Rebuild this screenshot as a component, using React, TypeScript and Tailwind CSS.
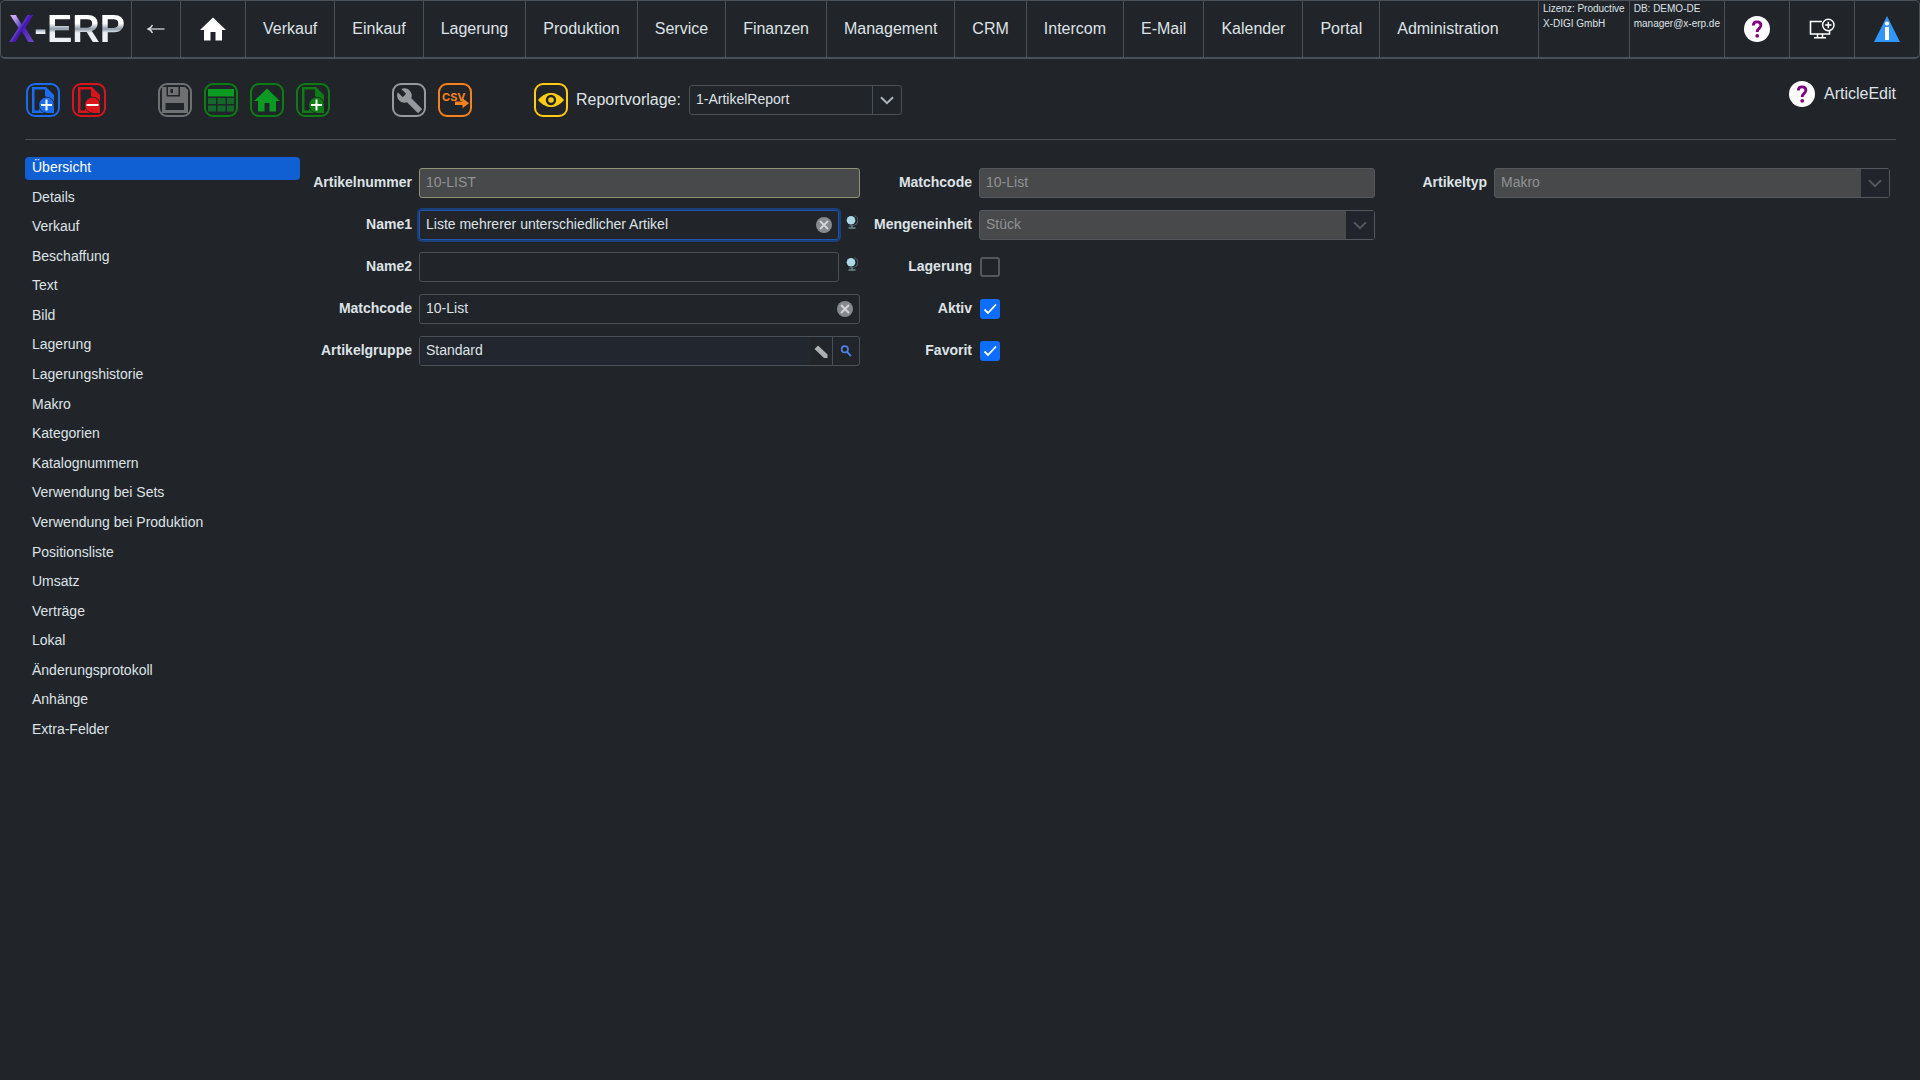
import React, { useState } from 'react';
import { MdBuild } from 'react-icons/md';

const menuItems = [
  'Verkauf', 'Einkauf', 'Lagerung', 'Produktion', 'Service', 'Finanzen', 'Management',
  'CRM', 'Intercom', 'E-Mail', 'Kalender', 'Portal', 'Administration',
];

const sections = [
  'Übersicht', 'Details', 'Verkauf', 'Beschaffung', 'Text', 'Bild', 'Lagerung',
  'Lagerungshistorie', 'Makro', 'Kategorien', 'Katalognummern', 'Verwendung bei Sets',
  'Verwendung bei Produktion', 'Positionsliste', 'Umsatz', 'Verträge', 'Lokal',
  'Änderungsprotokoll', 'Anhänge', 'Extra-Felder',
];

const BackArrow = () => (
  <svg viewBox="0 0 18 12" className="w-[18px]" fill="none" stroke="currentColor">
    <path d="M1.500 6H17.500" strokeWidth="1.200" />
    <path d="M5.500 2.200C4.500 4 3 5.300 1.200 6c1.800.7 3.300 2 4.300 3.800" strokeWidth="1.400" />
  </svg>
);

const HomeShape = ({ className }: { className: string }) => (
  <svg viewBox="0 0 34 34" className={className} fill="currentColor">
    <path d="M17 5.500 30 18h-4v10.500h-6.500V20h-5v8.500H8V18H4z" />
  </svg>
);

const HelpIcon = () => (
  <svg viewBox="0 0 26 26" className="size-[26px]">
    <circle cx="13" cy="13" r="13" fill="#fff" />
    <path d="M9.300 9.600C9.300 7 10.800 5.800 13 5.800s3.900 1.300 3.900 3.500c0 3-3.700 3.200-3.700 6.700" fill="none" stroke="#800080" strokeWidth="2.800" />
    <circle cx="13.200" cy="19.800" r="1.900" fill="#800080" />
  </svg>
);

const MonitorPlus = () => (
  <svg viewBox="0 0 26 22" className="w-[26px]" fill="none" stroke="#fff">
    <path d="M13 3.500H1.500v12.500h19v-3" strokeWidth="1.600" />
    <path d="M8.500 16v3.500M13.500 16v3.500M5 19.700h12" strokeWidth="1.500" />
    <circle cx="19.300" cy="7" r="5.700" strokeWidth="1.500" />
    <path d="M19.300 3.800v6.400M16.100 7h6.400" strokeWidth="1.500" />
  </svg>
);

const InfoTriangle = () => (
  <svg viewBox="0 0 26 26" className="size-[26px]">
    <path d="M13 0 26 26H0z" fill="#3296ff" />
    <circle cx="13" cy="7.500" r="2.100" fill="#fff" />
    <path d="M11 11h4v13h-4z" fill="#fff" />
  </svg>
);

const DocumentIcon = ({ minus = false }: { minus?: boolean }) => (
  <svg viewBox="0 0 34 34" className="size-[34px]">
    <path d="M6 4h14l8 8v18H6z" fill="currentColor" />
    <path d="M8.500 6.500H19V13l3 2.500h3V20H13v7.500H8.500z" fill="#212529" />
    <circle cx="20.500" cy="22" r="8.200" fill="#212529" />
    <circle cx="20.500" cy="22" r="7.400" fill="currentColor" />
    <path d="M20 24h8v6h-8z" fill="currentColor" />
    <path d={minus ? 'M14.500 22h12' : 'M15 22h11M20.500 16.500v11'} stroke="#fff" strokeWidth="2" />
  </svg>
);

const SaveIcon = () => (
  <svg viewBox="0 0 34 34" className="size-[34px]">
    <path d="M4 4h23l3 3v23H4z" fill="currentColor" />
    <path d="M8.500 4H22v9.500H8.500zM7.500 20H26v7H7.500z" fill="#212529" />
    <path d="M10 4h10.500v8H10z" fill="currentColor" />
    <path d="M12.500 6H15v4h-2.500z" fill="#212529" />
  </svg>
);

const TableIcon = () => (
  <svg viewBox="0 0 34 34" className="size-[34px]">
    <path d="M4 6h26v7.500H4z" fill="#0a9b23" />
    <path d="M4 15h8v6H4zM13.500 15h8v6h-8zM23 15h7v6h-7zM4 22.500h8v6H4zM13.500 22.500h8v6h-8zM23 22.500h7v6h-7z" fill="#14692a" />
  </svg>
);

const CsvIcon = () => (
  <svg viewBox="0 0 34 34" className="size-[34px]" fill="currentColor">
    <text x="4" y="18" fontFamily="Inter, sans-serif" fontSize="11" fontWeight="700">CSV</text>
    <path d="M17 18.500h7.500V15.200L31 20.200l-6.500 5v-3.200H17z" />
  </svg>
);

const EyeIcon = () => (
  <svg viewBox="0 0 34 34" className="size-[34px]">
    <path d="M4 17C9 11.500 13 10 17 10s8 1.500 13 7c-5 5.500-9 7-13 7s-8-1.500-13-7z" fill="currentColor" />
    <circle cx="17" cy="17" r="4" fill="none" stroke="#212529" strokeWidth="2.400" />
  </svg>
);

const Globe = () => (
  <svg viewBox="0 0 12 14" className="w-3">
    <path d="M8.500.8a5 5 0 0 1-1 9.700L3 10.800" fill="none" stroke="#4d6870" strokeWidth="1" />
    <path d="M2.500 13h7M6 10.500V13" stroke="#6c8a92" strokeWidth="1.400" />
    <circle cx="5" cy="5.200" r="4.300" fill="#add8e6" />
  </svg>
);

const Chevron = () => (
  <svg viewBox="0 0 14 9" className="w-3.5" fill="none" stroke="currentColor" strokeWidth="2">
    <path d="M1 1.200 7 7.200l6-6" />
  </svg>
);

const ToolButton = ({ label, className, children }: { label: string; className: string; children: React.ReactNode }) => (
  <button type="button" aria-label={label} className={`relative flex size-[34px] items-center justify-center ${className}`}>
    {children}
    <span className="absolute inset-0 rounded-[9px] border-2 border-current" />
  </button>
);

const NavCell = ({ label, className = 'px-4', children }: { label: string; className?: string; children: React.ReactNode }) => (
  <button type="button" aria-label={label} className={`flex items-center justify-center border-[#495057] ${className}`}>
    {children}
  </button>
);

const Row = ({ id, label, children }: { id: string; label: string; children: React.ReactNode }) => (
  <div className="flex h-[30px] items-center gap-[7px]">
    <label htmlFor={id} className="w-28 shrink-0 pb-0.5 text-right font-bold">{label}</label>
    {children}
  </div>
);

const inputClass = 'h-[30px] w-full min-w-0 rounded-[3px] border border-[#495057] bg-transparent px-1.5 pb-0.5 outline-none';
const disabledClass = 'h-[30px] w-full min-w-0 rounded-[3px] border bg-[#48494b] px-1.5 pb-0.5 text-[#909294]';

const ClearButton = ({ label, onClick }: { label: string; onClick: () => void }) => (
  <button type="button" aria-label={label} onClick={onClick} className="absolute right-[7px] top-[7px]">
    <svg viewBox="0 0 16 16" className="size-4">
      <circle cx="8" cy="8" r="8" fill="#868a8e" />
      <path d="m4 4 8 8m0-8-8 8" stroke="#d3d5d7" strokeWidth="1.800" />
    </svg>
  </button>
);

const DisabledSelect = ({ id, value }: { id: string; value: string }) => (
  <div className="relative w-full">
    <select id={id} disabled className={`${disabledClass} block appearance-none border-[#54585c] opacity-100`}>
      <option>{value}</option>
    </select>
    <span className="pointer-events-none absolute inset-y-px right-px flex w-7 items-center justify-center bg-[#21252b] text-[#54585c]">
      <Chevron />
    </span>
  </div>
);

const Checkbox = ({ id, defaultChecked = false }: { id: string; defaultChecked?: boolean }) => (
  <span className="relative ml-px flex">
    <input
      id={id}
      type="checkbox"
      defaultChecked={defaultChecked}
      className="peer size-5 appearance-none rounded-[3px] border-2 border-[#54585c] checked:border-[#0d6efd] checked:bg-[#0d6efd]"
    />
    <svg viewBox="0 0 20 20" className="pointer-events-none invisible absolute size-5 peer-checked:visible" fill="none" stroke="#fff" strokeWidth="1.800">
      <path d="m4.500 10.500 3.500 3.500 8-8.500" />
    </svg>
  </span>
);

const App: React.FC = () => {
  const [section, setSection] = useState('Übersicht');
  const [name1, setName1] = useState('Liste mehrerer unterschiedlicher Artikel');
  const [matchcode, setMatchcode] = useState('10-List');

  return (
    <div className="min-h-screen bg-[#212529] font-['Liberation_Sans',Arial,sans-serif] text-sm text-[#dee2e6]">
      {/* Navigation */}
      <header className="flex h-[59px] rounded-[5px] border border-b-2 border-[#495057] text-base">
        <div className="flex w-[130px] items-center justify-center pl-0.5 text-[38px] font-bold leading-none">
          <span className="bg-linear-to-br from-[#c9a8f0] from-20% via-[#4a12b8] via-50% to-[#7a50d0] bg-clip-text text-transparent">X</span>
          <span className="bg-linear-to-b from-white from-35% via-[#8f9cab] via-50% to-[#eef1f4] to-60% bg-clip-text text-transparent">-ERP</span>
        </div>
        <NavCell label="Zurück" className="w-[49px] border-l"><BackArrow /></NavCell>
        <NavCell label="Start" className="w-[65px] border-l text-white"><HomeShape className="size-[34px]" /></NavCell>
        <nav className="flex">
          {menuItems.map(item => (
            <a key={item} href="#" className="flex items-center border-l border-[#495057] px-[17px]">{item}</a>
          ))}
        </nav>
        <div className="ml-auto flex">
          <div className="border-l border-[#495057] px-1 text-[10px] leading-[15px]">
            <p>Lizenz: Productive</p>
            <p>X-DIGI GmbH</p>
          </div>
          <div className="border-l border-[#495057] px-1 text-[10px] leading-[15px]">
            <p>DB: DEMO-DE</p>
            <p>manager@x-erp.de</p>
          </div>
          <NavCell label="Hilfe" className="w-[65px] border-l"><HelpIcon /></NavCell>
          <NavCell label="Neues Fenster" className="w-[65px] border-l"><MonitorPlus /></NavCell>
          <NavCell label="Info" className="w-[65px] border-l"><InfoTriangle /></NavCell>
        </div>
      </header>

      <main className="pl-[25px] pr-6">
        {/* Toolbar */}
        <div className="flex items-start justify-between border-b border-[#495057] pb-[22px] pl-px pt-[22px]">
          <div className="flex items-center pt-0.5">
            <div className="flex gap-3">
              <ToolButton label="Neu" className="text-[#1a6df0]"><DocumentIcon /></ToolButton>
              <ToolButton label="Löschen" className="text-[#d9151b]"><DocumentIcon minus /></ToolButton>
            </div>
            <div className="ml-[52px] flex gap-3">
              <ToolButton label="Speichern" className="text-[#6f7072]"><SaveIcon /></ToolButton>
              <ToolButton label="Speichern und Liste" className="text-[#0b7d12]"><TableIcon /></ToolButton>
              <ToolButton label="Speichern und Start" className="text-[#0b7d12]"><HomeShape className="size-[34px] text-[#0a9b23]" /></ToolButton>
              <ToolButton label="Speichern und Neu" className="text-[#0b7d12]"><DocumentIcon /></ToolButton>
            </div>
            <div className="ml-[62px] flex gap-3">
              <ToolButton label="Werkzeuge" className="text-[#979a9c]"><MdBuild className="size-[27px]" /></ToolButton>
              <ToolButton label="CSV-Export" className="text-[#f5821f]"><CsvIcon /></ToolButton>
            </div>
            <div className="ml-[62px] flex items-center gap-2">
              <ToolButton label="Vorschau" className="text-[#fccb14]"><EyeIcon /></ToolButton>
              <label htmlFor="report" className="text-base">Reportvorlage:</label>
              <div className="relative w-[213px]">
                <select id="report" className={`${inputClass} block appearance-none`}>
                  <option>1-ArtikelReport</option>
                </select>
                <span className="pointer-events-none absolute inset-y-0 right-0 flex w-[30px] items-center justify-center border-l border-[#495057] text-[#adb5bd]">
                  <Chevron />
                </span>
              </div>
            </div>
          </div>
          <div className="flex items-center gap-[9px]">
            <HelpIcon />
            <span className="text-base">ArticleEdit</span>
          </div>
        </div>

        <div className="flex pt-[17px]">
          {/* Sections */}
          <nav className="w-[275px] shrink-0">
            <ul className="flex h-[585px] flex-col justify-between">
              {sections.map(item => (
                <li key={item}>
                  <button
                    type="button"
                    onClick={() => setSection(item)}
                    className={`block h-[23px] w-full rounded px-[7px] pb-[3px] text-left ${item === section ? 'bg-[#1060d4] text-white' : ''}`}
                  >
                    {item}
                  </button>
                </li>
              ))}
            </ul>
          </nav>

          {/* Article form */}
          <form className="grid grow grid-cols-[560fr_515fr_515fr] items-start pr-1.5 pt-[11px]">
            <div className="space-y-3">
              <Row id="number" label="Artikelnummer">
                <input id="number" disabled value="10-LIST" className={`${disabledClass} border-[#8f9174]`} />
              </Row>
              <Row id="name1" label="Name1">
                <div className="relative grow">
                  <input
                    id="name1"
                    value={name1}
                    onChange={e => setName1(e.target.value)}
                    className="block h-[30px] w-full rounded-[3px] border border-[#1d57ad] px-1.5 pb-0.5 outline-none ring-2 ring-[#1a3f78]"
                  />
                  <ClearButton label="Name1 leeren" onClick={() => setName1('')} />
                </div>
                <button type="button" aria-label="Name1 übersetzen" className="mr-0.5 pb-1.5"><Globe /></button>
              </Row>
              <Row id="name2" label="Name2">
                <input id="name2" className={inputClass} />
                <button type="button" aria-label="Name2 übersetzen" className="mr-0.5 pb-1.5"><Globe /></button>
              </Row>
              <Row id="matchcode" label="Matchcode">
                <div className="relative grow">
                  <input id="matchcode" value={matchcode} onChange={e => setMatchcode(e.target.value)} className={`${inputClass} block`} />
                  <ClearButton label="Matchcode leeren" onClick={() => setMatchcode('')} />
                </div>
              </Row>
              <Row id="group" label="Artikelgruppe">
                <div className="flex h-[30px] grow rounded-[3px] border border-[#495057]">
                  <input id="group" defaultValue="Standard" className="min-w-0 grow bg-[#22262e] px-1.5 pb-0.5 outline-none" />
                  <button type="button" aria-label="Artikelgruppe bearbeiten" className="px-1">
                    <svg viewBox="0 0 14 14" className="mt-0.5 w-3.5">
                      <path d="M.500 4 4 .5l9.500 9V13H10z" fill="#adafb1" />
                    </svg>
                  </button>
                  <button type="button" aria-label="Artikelgruppe suchen" className="flex w-[27px] items-center justify-center border-l border-[#495057]">
                    <svg viewBox="0 0 12 12" className="w-3" fill="none" stroke="#4d7fe8">
                      <circle cx="4.800" cy="4.300" r="3.200" strokeWidth="1.700" />
                      <path d="m7 6.800 4 4.400" strokeWidth="2" />
                    </svg>
                  </button>
                </div>
              </Row>
            </div>

            <div className="space-y-3">
              <Row id="match2" label="Matchcode">
                <input id="match2" disabled value="10-List" className={`${disabledClass} border-[#54585c]`} />
              </Row>
              <Row id="unit" label="Mengeneinheit"><DisabledSelect id="unit" value="Stück" /></Row>
              <Row id="storage" label="Lagerung"><Checkbox id="storage" /></Row>
              <Row id="active" label="Aktiv"><Checkbox id="active" defaultChecked /></Row>
              <Row id="favorite" label="Favorit"><Checkbox id="favorite" defaultChecked /></Row>
            </div>

            <div>
              <Row id="type" label="Artikeltyp"><DisabledSelect id="type" value="Makro" /></Row>
            </div>
          </form>
        </div>
      </main>
    </div>
  );
};

export default App;
